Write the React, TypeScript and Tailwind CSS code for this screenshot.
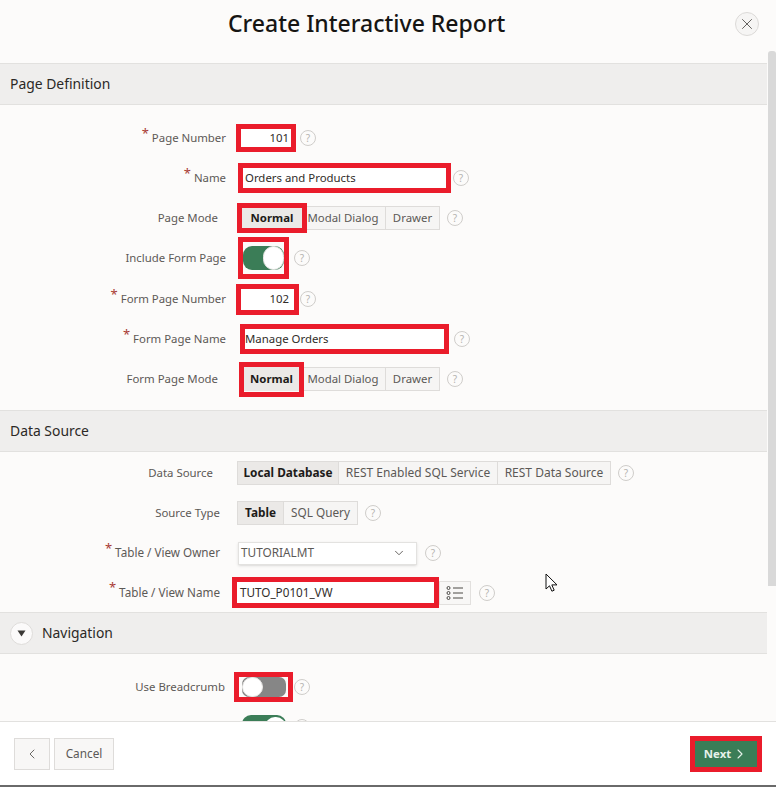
import type { ReactNode } from "react";
import { ChevronDown, ChevronLeft, ChevronRight, X } from "lucide-react";

const RED = "border-[5px] border-[#ea1c2b]";

function Help({ className = "", empty }: { className?: string; empty?: boolean }) {
  return (
    <span
      className={`flex h-4 w-4 shrink-0 items-center justify-center rounded-full border border-[#cfcdca] text-[10px] leading-none text-[#b5b3b0] ${className}`}
    >
      {empty ? "" : "?"}
    </span>
  );
}

function Label({ text, width, required, size = "text-[11.4px]" }: { text: string; width: string; required?: boolean; size?: string }) {
  return (
    <div className={`flex shrink-0 items-center justify-end text-[#5c5956] ${size} ${width}`}>
      {required && <span className="mb-[10px] mr-[3px] text-[13px] leading-none text-[#a83a33]">*</span>}
      {text}
    </div>
  );
}

function Row({ children, className = "h-10" }: { children: ReactNode; className?: string }) {
  return <div className={`flex items-center ${className}`}>{children}</div>;
}

function SectionHead({ children }: { children: ReactNode }) {
  return (
    <div className="flex h-[42px] items-center border-y border-[#e2e1df] bg-[#efeeed] px-[10px] text-[13.9px] text-[#2b2926]">
      {children}
    </div>
  );
}

function Seg({ text, on, className = "", size = "text-[11.4px]" }: { text: string; on?: boolean; className?: string; size?: string }) {
  return (
    <span
      className={`flex h-6 items-center justify-center border border-[#dedcda] ${size} ${
        on ? "bg-[#ebe9e7] font-bold text-[#1d1b19]" : "bg-[#f6f5f4] text-[#5c5956]"
      } ${className}`}
    >
      {text}
    </span>
  );
}

function ModeGroup({ boxClass, normalClass, modalClass }: { boxClass: string; normalClass: string; modalClass: string }) {
  return (
    <div className="flex items-center">
      <div className={`${RED} ${boxClass} flex items-center justify-center`}>
        <Seg text="Normal" on className={normalClass} />
      </div>
      <Seg text="Modal Dialog" className={`border-l-0 ${modalClass}`} />
      <Seg text="Drawer" className="w-[54px] border-l-0" />
    </div>
  );
}

function Toggle() {
  return (
    <div className="flex h-[24px] w-[41px] items-center justify-end rounded-[9px] bg-[#3b7d57]">
      <span className="h-[24px] w-[21px] rounded-[11px] border border-[#e8e7e5] bg-white" />
    </div>
  );
}

export default function App() {
  return (
    <div className="relative flex h-[787px] w-[776px] flex-col overflow-hidden bg-[#fcfbfa] font-['Noto_Sans','Open_Sans',sans-serif]">
      <header className="flex h-[63px] shrink-0 items-center pl-[228px]">
        <h1 className="pb-[16px] text-[23px] font-medium text-[#161513]">Create Interactive Report</h1>
        <button className="mb-[16px] ml-auto mr-[17px] flex h-6 w-6 items-center justify-center rounded-full border border-[#dcdad8] bg-[#f6f5f4] text-[#55524f]">
          <X size={18} strokeWidth={1.2} />
        </button>
      </header>

      <main className="h-[658px] w-[767px] shrink-0 overflow-hidden">
        <SectionHead>Page Definition</SectionHead>
        <section className="pt-[13px]">
          <Row>
            <Label text="Page Number" width="w-[226px]" required />
            <div className={`${RED} ml-[10px] flex h-[28px] w-[60px] items-center justify-end bg-white pr-[2px] text-[11.4px] text-[#312d2a]`}>101</div>
            <Help className="ml-[4px]" />
          </Row>
          <Row>
            <Label text="Name" width="w-[226px]" required />
            <div className={`${RED} ml-[12px] flex h-[30px] w-[213px] items-center bg-white pl-[2px] text-[11.4px] text-[#312d2a]`}>Orders and Products</div>
            <Help className="ml-[2px]" />
          </Row>
          <Row>
            <Label text="Page Mode" width="w-[218px]" />
            <div className="ml-[19px]">
              <ModeGroup boxClass="h-[30px] w-[70px]" normalClass="w-[60px] border-0 h-[20px]" modalClass="w-[79px] pr-[6px]" />
            </div>
            <Help className="ml-[7px]" />
          </Row>
          <Row>
            <Label text="Include Form Page" width="w-[226px]" />
            <div className={`${RED} ml-[12px] flex h-[42px] w-[51px] items-center justify-center`}>
              <Toggle />
            </div>
            <Help className="ml-[5px]" />
          </Row>
          <Row className="mt-[1px] h-10">
            <Label text="Form Page Number" width="w-[226px]" required />
            <div className={`${RED} ml-[10px] flex h-[31px] w-[63px] items-center justify-end bg-white pr-[5px] text-[11.4px] text-[#312d2a]`}>102</div>
            <Help className="ml-[1px]" />
          </Row>
          <Row>
            <Label text="Form Page Name" width="w-[226px]" required />
            <div className={`${RED} ml-[14px] flex h-[30px] w-[209px] items-center bg-white text-[11.4px] text-[#312d2a]`}>Manage Orders</div>
            <Help className="ml-[5px]" />
          </Row>
          <Row>
            <Label text="Form Page Mode" width="w-[218px]" />
            <div className="ml-[21px]">
              <ModeGroup boxClass="h-[35px] w-[65px]" normalClass="w-[55px] border-0 h-[24px]" modalClass="w-[82px] pr-[3px]" />
            </div>
            <Help className="ml-[7px]" />
          </Row>
        </section>

        <div className="mt-[11px]">
          <SectionHead>Data Source</SectionHead>
        </div>
        <section className="pt-[1px]">
          <Row>
            <Label text="Data Source" width="w-[213px]" />
            <div className="ml-[24px] flex">
              <Seg text="Local Database" on size="text-[11.8px]" className="w-[102px]" />
              <Seg text="REST Enabled SQL Service" size="text-[12px]" className="w-[159px] border-l-0" />
              <Seg text="REST Data Source" size="text-[12px]" className="w-[113px] border-l-0" />
            </div>
            <Help className="ml-[7px]" />
          </Row>
          <Row>
            <Label text="Source Type" width="w-[220px]" />
            <div className="ml-[17px] flex">
              <Seg text="Table" on size="text-[11.8px]" className="w-[47px]" />
              <Seg text="SQL Query" size="text-[11.8px]" className="w-[74px] border-l-0" />
            </div>
            <Help className="ml-[7px]" />
          </Row>
          <Row>
            <Label text="Table / View Owner" width="w-[220px]" size="text-[11.7px]" required />
            <div className="ml-[18px] flex h-[23px] w-[179px] items-center justify-between border border-[#e3e2e0] bg-white pl-[2px] pr-[10px] text-[11.8px] text-[#5c5956] shadow-sm">
              TUTORIALMT
              <ChevronDown size={14} strokeWidth={1.6} />
            </div>
            <Help className="ml-[8px]" />
          </Row>
          <Row className="h-[39px]">
            <Label text="Table / View Name" width="w-[220px]" size="text-[11.7px]" required />
            <div className={`${RED} ml-[12px] flex h-[31px] w-[207px] items-center bg-white pl-[3px] text-[11.7px] text-[#312d2a]`}>TUTO_P0101_VW</div>
            <button className="flex h-[24px] w-[32px] items-center justify-center border border-[#e2e0de] bg-[#f8f7f6]">
              <svg width="18" height="14" viewBox="0 0 18 14" fill="none" stroke="#4a4845" strokeWidth="1">
                <circle cx="2.5" cy="2" r="1.5" />
                <circle cx="2.5" cy="7" r="1.5" />
                <circle cx="2.5" cy="12" r="1.5" />
                <path d="M7 2h10M7 7h10M7 12h10" />
              </svg>
            </button>
            <Help className="ml-[8px]" />
          </Row>
        </section>

        <SectionHead>
          <span className="flex h-[23px] w-[23px] items-center justify-center rounded-full border border-[#dedcda] bg-[#fbfafa]">
            <svg width="9" height="7" viewBox="0 0 9 7" fill="#3a3835">
              <path d="M0.5 0.5h8L4.5 6.5z" />
            </svg>
          </span>
          <span className="ml-[9px]">Navigation</span>
        </SectionHead>
        <section className="pt-[13px]">
          <Row>
            <Label text="Use Breadcrumb" width="w-[225px]" />
            <div className={`${RED} ml-[9px] flex h-[30px] w-[59px] items-center justify-center`}>
              <div className="flex h-[20px] w-[44px] items-center justify-start rounded-[7px] bg-[#868686]">
                <span className="h-[20px] w-[21px] rounded-[10px] border border-[#e8e7e5] bg-white" />
              </div>
            </div>
            <Help className="ml-[1px]" />
          </Row>
          <Row>
            <div className="ml-[242px] flex h-[24px] w-[44px] items-center justify-end rounded-[9px] bg-[#3b7d57]">
              <span className="h-[20px] w-[21px] rounded-full bg-white" />
            </div>
            <Help className="ml-[8px]" empty />
          </Row>
        </section>
      </main>

      <footer className="flex h-[64px] shrink-0 items-center border-t border-[#e2e1df] bg-white px-[14px]">
        <button className="flex h-8 w-9 items-center justify-center border border-[#dedcda] bg-[#f8f7f6] text-[#55524f]">
          <ChevronLeft size={16} strokeWidth={1.3} />
        </button>
        <button className="ml-1 flex h-8 w-[60px] items-center justify-center border border-[#dedcda] bg-[#f8f7f6] text-[11.8px] text-[#5c5956]">
          Cancel
        </button>
        <div className={`${RED} ml-auto flex h-9 w-[72px] items-center justify-center gap-[1px] bg-[#3a7d57] text-[11.4px] font-bold text-[#e6f2ea]`}>
          Next
          <ChevronRight size={16} strokeWidth={1.6} />
        </div>
      </footer>

      <div className="h-[2px] shrink-0 bg-[#6a6a6a]" />

      {/* scrollbar and mouse pointer sit over the dialog */}
      <div className="absolute right-0 top-[51px] h-[535px] w-[8px] rounded-t-[3px] bg-[#d9d9d9]" />
      <svg className="absolute left-[545px] top-[573px]" width="14" height="20" viewBox="0 0 14 20" fill="#fff" stroke="#111" strokeWidth="1">
        <path d="M1 1v15l3.5-3.2 2.4 5.4 2.3-1-2.4-5.3H12z" />
      </svg>
    </div>
  );
}
